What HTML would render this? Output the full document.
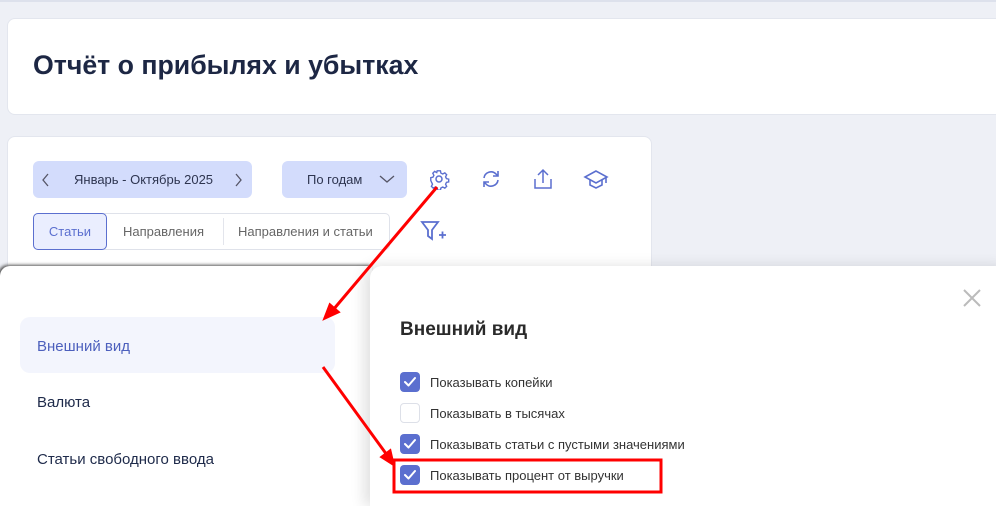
<!DOCTYPE html>
<html><head><meta charset="utf-8"><style>
*{box-sizing:border-box;margin:0;padding:0}
body{width:996px;height:500px;overflow:hidden;background:#eef0f6;font-family:"Liberation Sans",sans-serif;position:relative}
.card{position:absolute;background:#fff;border:1px solid #e3e6ee;border-radius:8px}
.abs{position:absolute}
.btn{position:absolute;background:#d3dcfc;border-radius:6px;color:#2e3550;font-size:13px;display:flex;align-items:center}
.cb{position:absolute;left:400px;width:20px;height:20px;border-radius:4px;background:#5b6fcf}
.cb.off{background:#fff;border:1px solid #dde0e8}
.lbl{position:absolute;left:430px;font-size:13px;color:#333}
</style></head><body>
<div class="abs" style="left:0;top:0;width:996px;height:2px;background:#dde1ec"></div>
<div class="card" style="left:7px;top:18px;width:1000px;height:97px"></div>
<div class="abs" style="left:33px;top:50px;font-size:26.7px;font-weight:bold;color:#1d2744">Отчёт о прибылях и убытках</div>
<div class="card" style="left:7px;top:136px;width:645px;height:150px"></div>
<div class="btn" style="left:33px;top:161px;width:219px;height:37px">
<svg class="abs" style="left:9px;top:12px" width="8" height="14"><path d="M6 1L1 7l5 6" stroke="#556" fill="none" stroke-width="1.3"/></svg>
<span style="position:absolute;left:41px">Январь - Октябрь 2025</span>
<svg class="abs" style="left:201px;top:12px" width="8" height="14"><path d="M2 1l5 6-5 6" stroke="#556" fill="none" stroke-width="1.3"/></svg></div>
<div class="btn" style="left:282px;top:161px;width:125px;height:37px"><span style="position:absolute;left:25px">По годам</span>
<svg class="abs" style="left:97px;top:13px" width="16" height="10"><path d="M1 2l7 6 7-6" stroke="#556" fill="none" stroke-width="1.3"/></svg></div>
<svg class="abs" style="left:428px;top:168px" width="22" height="22" viewBox="0 0 22 22" fill="none" stroke="#5b6fcf" stroke-width="1.5"><circle cx="11" cy="11" r="3"/><path d="M9.5 2h3l.5 2.5 2 1 2.3-1.2 2 2-1.2 2.3 1 2 2.4.5v3l-2.4.5-1 2 1.2 2.3-2 2-2.3-1.2-2 1-.5 2.4h-3l-.5-2.4-2-1-2.3 1.2-2-2 1.2-2.3-1-2L2 12.5v-3l2.4-.5 1-2L4.2 4.7l2-2L8.5 4l.5-2z" transform="scale(.92) translate(1 1)"/></svg>
<svg class="abs" style="left:479px;top:167px" width="24" height="24" viewBox="0 0 24 24" fill="none" stroke="#5b6fcf" stroke-width="1.6"><path d="M5 11a7 7 0 0 1 12-4l2 2M19 13a7 7 0 0 1-12 4l-2-2"/><path d="M19 4v5h-5M5 20v-5h5"/></svg>
<svg class="abs" style="left:532px;top:167px" width="22" height="24" viewBox="0 0 22 24" fill="none" stroke="#5b6fcf" stroke-width="1.5"><path d="M11 16V3M6 8l5-5 5 5M3 12v9h16v-9"/></svg>
<svg class="abs" style="left:583px;top:167px" width="26" height="24" viewBox="0 0 26 24" fill="none" stroke="#5b6fcf" stroke-width="1.6"><path d="M13 4L2 10l11 6 11-6z"/><path d="M7 13v5l6 3 6-3v-5M23 10v6"/></svg>
<div class="abs" style="left:33px;top:213px;width:357px;height:37px;border:1px solid #dfe2ea;border-radius:5px"></div>
<div class="abs" style="left:33px;top:213px;width:74px;height:37px;border:1px solid #5b6fcf;border-radius:5px;background:#eaeefe;color:#5b6fcf;font-size:13px;text-align:center;line-height:35px">Статьи</div>
<div class="abs" style="left:123px;top:224px;font-size:13px;color:#666">Направления</div>
<div class="abs" style="left:223px;top:218px;width:1px;height:27px;background:#e3e5ec"></div>
<div class="abs" style="left:238px;top:224px;font-size:13px;color:#666">Направления и статьи</div>
<svg class="abs" style="left:420px;top:219px" width="28" height="24" viewBox="0 0 28 24" fill="none" stroke="#5b6fcf" stroke-width="1.8"><path d="M2 3h16l-6 8v9l-4-3v-6z"/><path d="M19 16h7M22.5 12.5v7"/></svg>
<div class="abs" style="left:0;top:266px;width:372px;height:240px;background:#fff;border-top-left-radius:10px;box-shadow:-2px -1px 3px #555"></div>
<div class="abs" style="left:370px;top:266px;width:640px;height:240px;background:#fff;border-top-left-radius:12px;box-shadow:-6px 0 14px rgba(0,0,0,.12)"></div>
<div class="abs" style="left:20px;top:317px;width:315px;height:56px;background:#f3f5fd;border-radius:10px"></div>
<div class="abs" style="left:37px;top:338px;font-size:15px;color:#4d60bd">Внешний вид</div>
<div class="abs" style="left:37px;top:394px;font-size:15px;color:#1e2a4a">Валюта</div>
<div class="abs" style="left:37px;top:451px;font-size:15px;color:#1e2a4a">Статьи свободного ввода</div>
<svg class="abs" style="left:962px;top:288px" width="20" height="20"><path d="M2 2l16 16M18 2L2 18" stroke="#bbb" stroke-width="2"/></svg>
<div class="abs" style="left:400px;top:319px;font-size:19px;font-weight:bold;color:#2a2a2a">Внешний вид</div>
<div class="cb" style="top:372px"></div><div class="lbl" style="top:375px">Показывать копейки</div>
<div class="cb off" style="top:403px"></div><div class="lbl" style="top:406px">Показывать в тысячах</div>
<div class="cb" style="top:434px"></div><div class="lbl" style="top:437px">Показывать статьи с пустыми значениями</div>
<div class="cb" style="top:465px"></div><div class="lbl" style="top:468px">Показывать процент от выручки</div>
<svg class="abs" style="left:0;top:0" width="996" height="500">
<g fill="none" stroke="#fff" stroke-width="2" stroke-linecap="round" stroke-linejoin="round"><path d="M405 382l3.5 3.5 6.5-7.5M405 444l3.5 3.5 6.5-7.5M405 475l3.5 3.5 6.5-7.5"/></g>
<rect x="394" y="460" width="267" height="32" fill="none" stroke="#f00" stroke-width="3"/>
<g stroke="#f00" stroke-width="3" fill="#f00"><path d="M437 187L333 310"/><path d="M325 318l5-13 8 7z"/>
<path d="M323 367L387 455"/><path d="M393 464l-11-7 8-6z"/></g>
</svg>
</body></html>
